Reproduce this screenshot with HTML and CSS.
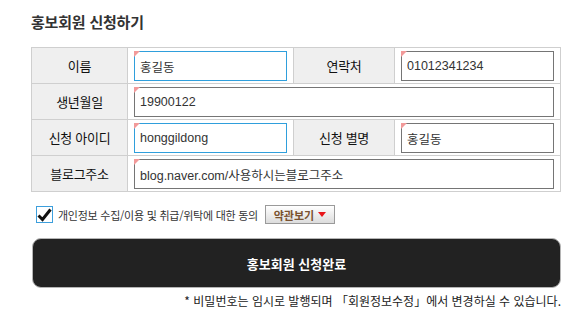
FILE: index.html
```html
<!DOCTYPE html>
<html lang="ko">
<head>
  <meta charset="UTF-8">
  <title>홍보회원 신청하기</title>
  <link rel="stylesheet" href="styles.css">
</head>
<body>
  <div class="wrap">
    <h1 class="title">홍보회원 신청하기</h1>

    <!-- 신청 폼 -->
    <table class="form-table">
      <colgroup>
        <col class="col-label">
        <col class="col-input">
        <col class="col-label2">
        <col>
      </colgroup>
      <tr>
        <th>이름</th>
        <td><span class="field"><input type="text" class="active" value="홍길동"></span></td>
        <th>연락처</th>
        <td><span class="field"><input type="text" value="01012341234"></span></td>
      </tr>
      <tr>
        <th>생년월일</th>
        <td colspan="3"><span class="field"><input type="text" value="19900122"></span></td>
      </tr>
      <tr>
        <th>신청 아이디</th>
        <td><span class="field"><input type="text" class="active" value="honggildong"></span></td>
        <th>신청 별명</th>
        <td><span class="field"><input type="text" value="홍길동"></span></td>
      </tr>
      <tr>
        <th>블로그주소</th>
        <td colspan="3"><span class="field"><input type="text" value="blog.naver.com/사용하시는블로그주소"></span></td>
      </tr>
    </table>

    <!-- 약관 동의 -->
    <div class="agree">
      <span class="check">
        <svg width="15" height="14" viewBox="0 0 15 14"><path d="M1.5 7.5 L5.5 11.5 L13.5 1.5" fill="none" stroke="#111" stroke-width="3"/></svg>
      </span>
      <span class="agree-text">개인정보 수집/이용 및 취급/위탁에 대한 동의</span>
      <button class="terms-btn">약관보기 <span class="arrow"></span></button>
    </div>

    <button class="submit-btn">홍보회원 신청완료</button>

    <p class="note">* 비밀번호는 임시로 발행되며 「회원정보수정」에서 변경하실 수 있습니다.</p>
  </div>
</body>
</html>
```

FILE: styles.css
```css
body {
  margin: 0;
  padding: 0;
  background-color: #fff;
  font-family: "Noto Sans CJK KR", "Liberation Sans", sans-serif;
  color: #222;
}

.wrap {
  width: 530px;
  padding: 11px 0 0 31px;
}

.title {
  margin: 0;
  font-size: 15px;
  font-weight: bold;
  color: #333;
  letter-spacing: -0.2px;
  line-height: 22px;
}

/* Form table */
.form-table {
  margin-top: 14px;
  width: 530px;
  border-collapse: collapse;
  table-layout: fixed;
}

.col-label { width: 96px; }
.col-input { width: 166px; }
.col-label2 { width: 101px; }

.form-table tr {
  height: 36px;
}

.form-table th,
.form-table td {
  border: 1px solid #cfcfcf;
  padding: 0;
}

.form-table th {
  background-color: #efefef;
  font-size: 13px;
  font-weight: normal;
  color: #111;
  letter-spacing: -0.3px;
  text-align: center;
}

.form-table td {
  padding: 0 6px;
}

.field {
  position: relative;
  display: block;
  padding-top: 1px;
}

/* little red corner mark */
.field::before {
  content: "";
  position: absolute;
  top: 1px;
  left: 0;
  border-top: 6px solid #f29a9a;
  border-right: 6px solid transparent;
}

.field input {
  display: block;
  box-sizing: border-box;
  width: 100%;
  height: 30px;
  margin: 0;
  padding: 0 5px;
  border: 1px solid #757575;
  font-family: "Liberation Sans", "Noto Sans CJK KR", sans-serif;
  font-size: 12.5px;
  color: #333;
  outline: none;
}

.field input.active {
  border-color: #2f9fdc;
}

/* Agree row */
.agree {
  display: flex;
  align-items: center;
  margin-top: 13px;
  padding-left: 5px;
  height: 19px;
}

.check {
  box-sizing: border-box;
  width: 17px;
  height: 17px;
  border: 1px solid #3d9fdc;
  background-color: #fff;
  display: flex;
  align-items: center;
  justify-content: center;
}

.agree-text {
  margin-left: 5px;
  font-size: 11px;
  color: #333;
  letter-spacing: -0.25px;
}

.terms-btn {
  box-sizing: border-box;
  margin-left: 7px;
  width: 70px;
  height: 19px;
  padding: 0;
  border: 1px solid #9a9a9a;
  background: linear-gradient(#ffffff, #dcdcdc);
  font-family: "Noto Sans CJK KR", sans-serif;
  font-size: 11px;
  font-weight: bold;
  color: #7a5230;
  display: flex;
  align-items: center;
  justify-content: center;
  gap: 4px;
  cursor: pointer;
}

.arrow {
  width: 0;
  height: 0;
  border-left: 4px solid transparent;
  border-right: 4px solid transparent;
  border-top: 5px solid #e8161b;
}

/* Submit */
.submit-btn {
  display: block;
  box-sizing: border-box;
  margin: 14px 0 0 1px;
  width: 529px;
  height: 50px;
  border: 1px solid #b5b5b5;
  border-radius: 9px;
  background-color: #222;
  color: #fff;
  font-family: "Noto Sans CJK KR", sans-serif;
  font-size: 13px;
  font-weight: bold;
  cursor: pointer;
}

.note {
  margin: 5px 0 0;
  text-align: right;
  font-size: 12px;
  letter-spacing: 0;
  color: #222;
  line-height: 16px;
}
```
